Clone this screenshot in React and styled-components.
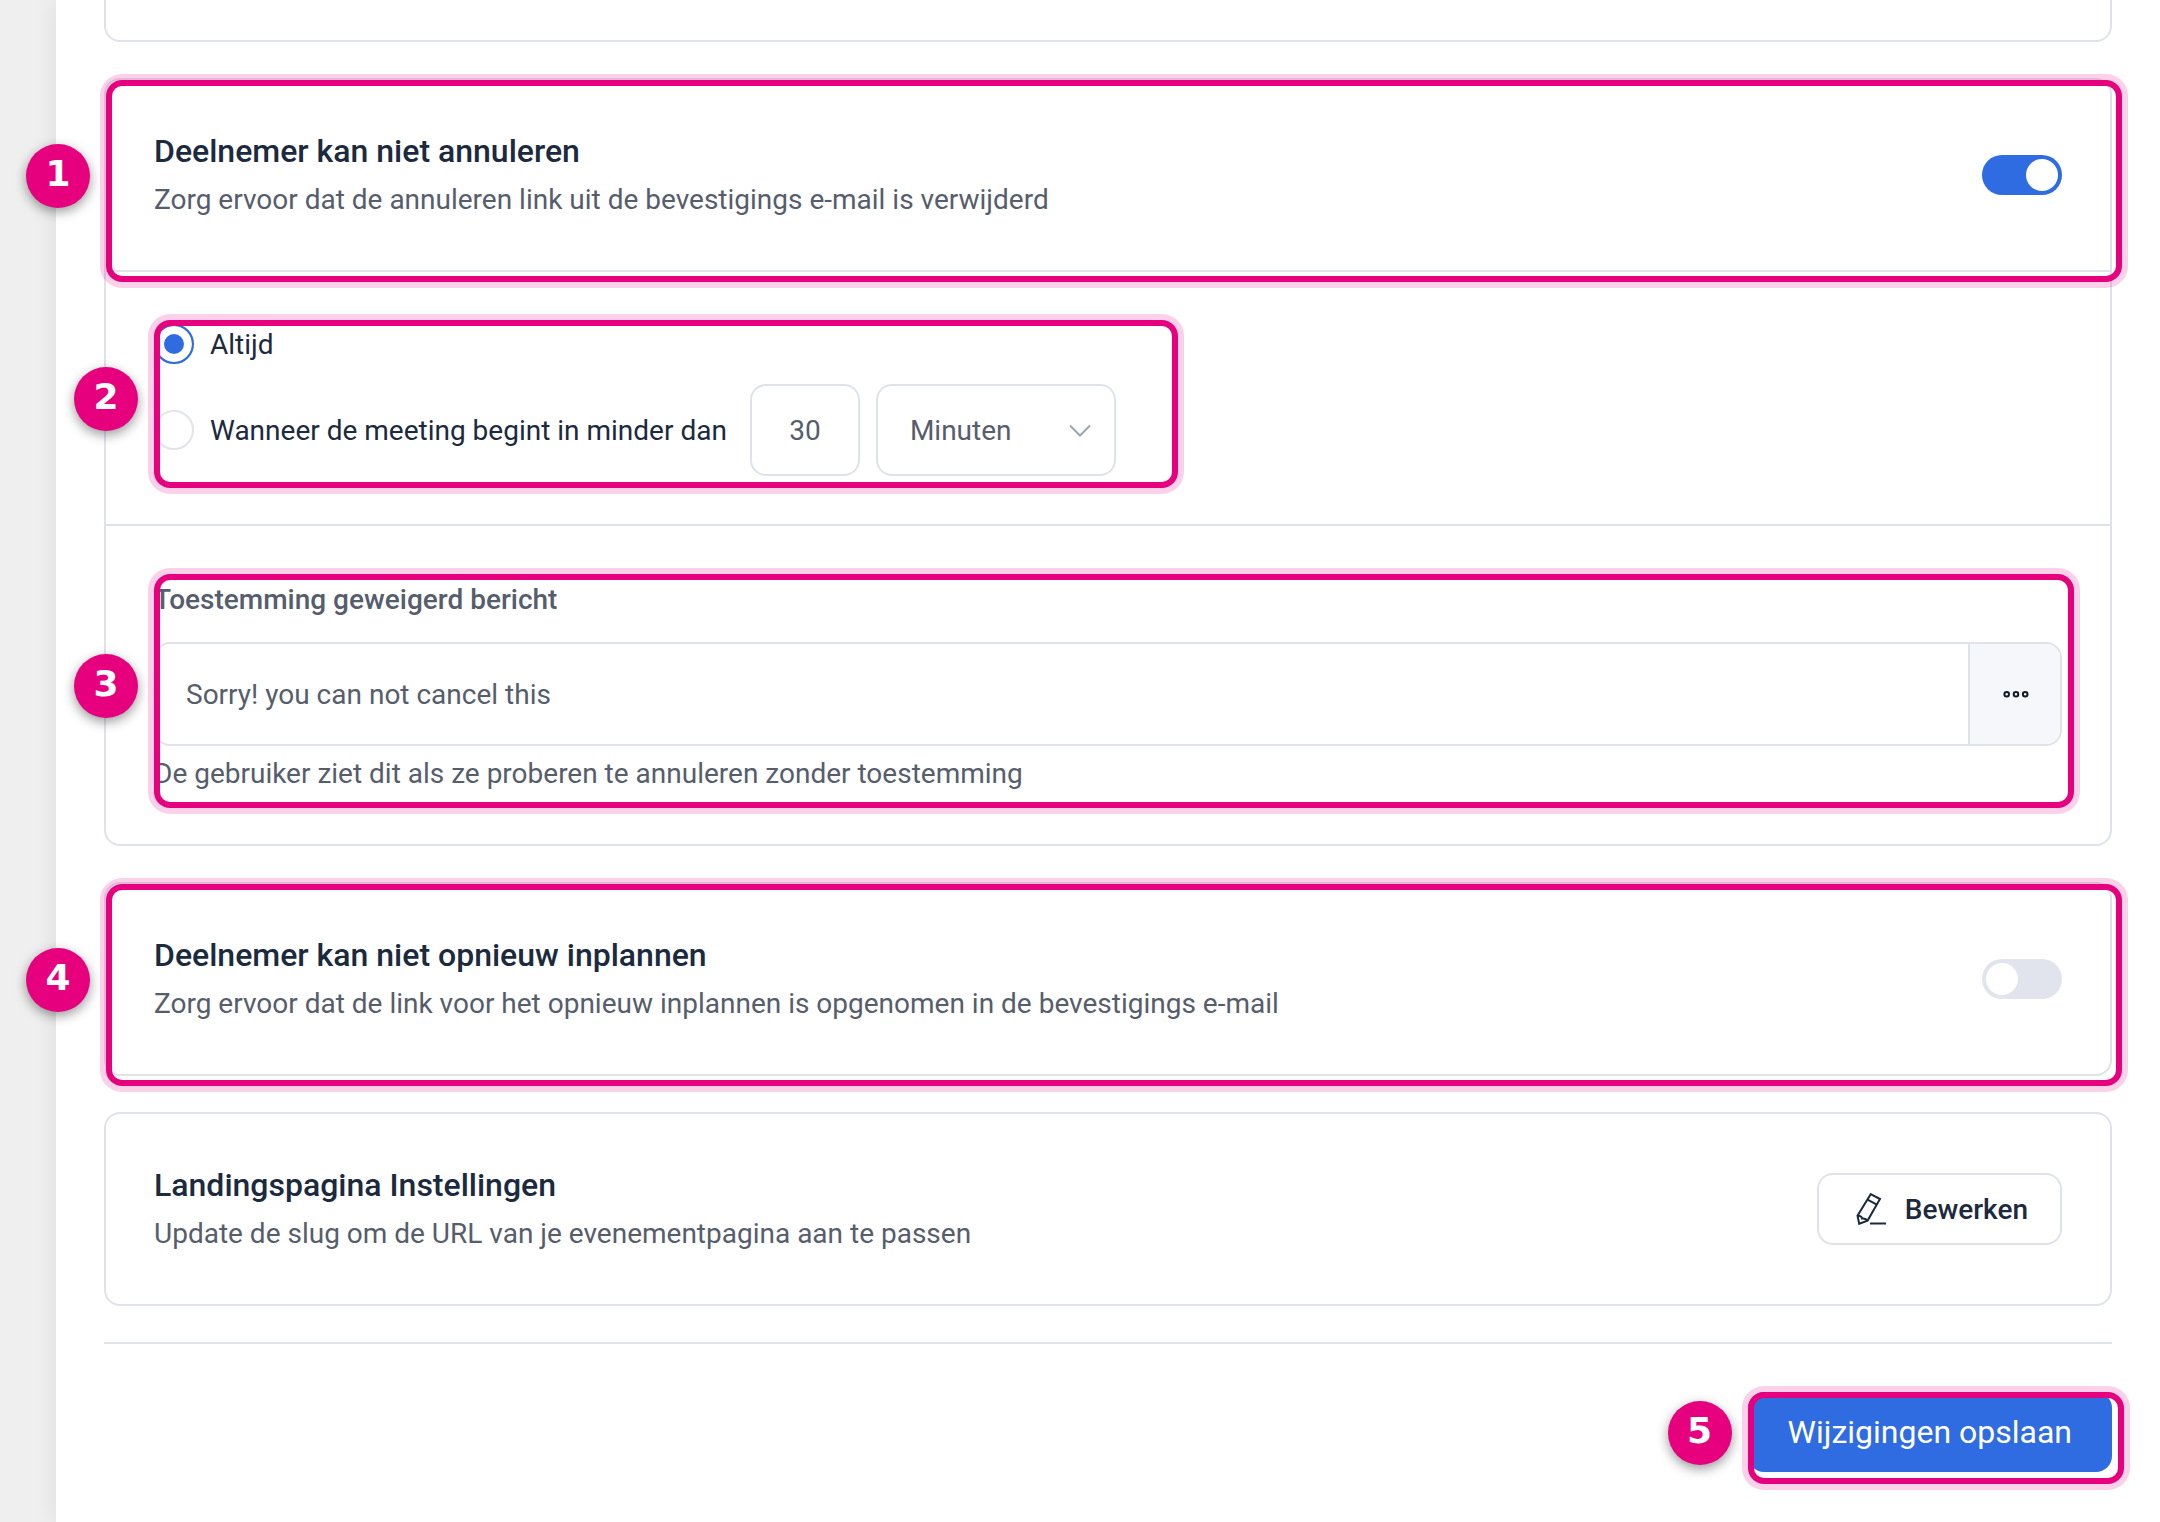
import React, { useState } from "react";
import styled, { createGlobalStyle, css } from "styled-components";

const theme = {
  blue: "#2f6be1",
  pink: "#e6007e",
  glow: "rgba(230, 0, 126, 0.18)",
  dark: "#1b2a3e",
  gray: "#565d6d",
  border: "#dfe3e9",
  off: "#e1e4ec",
};

const App = () => {
  const [noCancel, setNoCancel] = useState(true);
  const [noReschedule, setNoReschedule] = useState(false);
  const [when, setWhen] = useState("always");
  const [amount, setAmount] = useState("30");
  const [unit, setUnit] = useState("minutes");
  const [message, setMessage] = useState("Sorry! you can not cancel this");

  return (
    <Page>
      <GlobalStyle />
      <Panel>
        <CardEnd />

        <Card>
          <CardHeader>
            <label htmlFor="noCancel">
              <Title>Deelnemer kan niet annuleren</Title>
              <Text>
                Zorg ervoor dat de annuleren link uit de bevestigings e-mail is
                verwijderd
              </Text>
            </label>
            <Toggle
              id="noCancel"
              type="checkbox"
              checked={noCancel}
              onChange={() => setNoCancel(!noCancel)}
            />
            <Marker n="1" />
          </CardHeader>
          <Section>
            <Options>
              <Option>
                <Radio
                  id="always"
                  type="radio"
                  name="when"
                  checked={when === "always"}
                  onChange={() => setWhen("always")}
                />
                <label htmlFor="always">Altijd</label>
              </Option>
              <Option>
                <Radio
                  id="within"
                  type="radio"
                  name="when"
                  checked={when === "within"}
                  onChange={() => setWhen("within")}
                />
                <label htmlFor="within">
                  Wanneer de meeting begint in minder dan
                </label>
                <Fields>
                  <NumberInput
                    aria-label="Aantal"
                    value={amount}
                    onChange={(e) => setAmount(e.target.value)}
                  />
                  <SelectBox>
                    <select
                      aria-label="Eenheid"
                      value={unit}
                      onChange={(e) => setUnit(e.target.value)}
                    >
                      <option value="minutes">Minuten</option>
                      <option value="hours">Uren</option>
                      <option value="days">Dagen</option>
                    </select>
                    <svg width="22" height="14" viewBox="0 0 22 14">
                      <path
                        d="M1 1.5L11 11.5L21 1.5"
                        fill="none"
                        stroke="#9aa5b1"
                        strokeWidth="2"
                      />
                    </svg>
                  </SelectBox>
                </Fields>
              </Option>
              <Marker n="2" />
            </Options>
          </Section>
          <Section>
            <Message>
              <label htmlFor="message">Toestemming geweigerd bericht</label>
              <InputGroup>
                <input
                  id="message"
                  value={message}
                  onChange={(e) => setMessage(e.target.value)}
                />
                <button aria-label="Meer">
                  <svg width="28" height="8" viewBox="0 0 28 8">
                    <g fill="none" stroke="#131a26" strokeWidth="2">
                      <circle cx="4.7" cy="4.3" r="2.3" />
                      <circle cx="14" cy="4.3" r="2.3" />
                      <circle cx="23.2" cy="4.3" r="2.3" />
                    </g>
                  </svg>
                </button>
              </InputGroup>
              <Help>
                De gebruiker ziet dit als ze proberen te annuleren zonder
                toestemming
              </Help>
              <Marker n="3" />
            </Message>
          </Section>
        </Card>

        <Card>
          <CardHeader>
            <label htmlFor="noReschedule">
              <Title>Deelnemer kan niet opnieuw inplannen</Title>
              <Text>
                Zorg ervoor dat de link voor het opnieuw inplannen is opgenomen
                in de bevestigings e-mail
              </Text>
            </label>
            <Toggle
              id="noReschedule"
              type="checkbox"
              checked={noReschedule}
              onChange={() => setNoReschedule(!noReschedule)}
            />
            <Marker n="4" />
          </CardHeader>
        </Card>

        <Card>
          <CardHeader>
            <div>
              <Title>Landingspagina Instellingen</Title>
              <Text>
                Update de slug om de URL van je evenementpagina aan te passen
              </Text>
            </div>
            <EditButton>
              <PencilIcon />
              Bewerken
            </EditButton>
          </CardHeader>
        </Card>

        <Footer>
          <SaveWrap>
            <SaveButton>Wijzigingen opslaan</SaveButton>
            <Marker n="5" />
          </SaveWrap>
        </Footer>
      </Panel>
    </Page>
  );
};

export default App;

// pink frame with its number, laid over the parent
const Marker = ({ n }) => (
  <>
    <Frame />
    <Badge>{n}</Badge>
  </>
);

const PencilIcon = () => (
  <svg width="32" height="32" viewBox="0 0 32 32">
    <g fill="none" stroke={theme.dark} strokeWidth="2">
      <path d="M15.7 1.2L25 6L12.6 27.6L4.2 30.8L2.5 22.8Z" />
      <path d="M12.5 6.6L21.8 11.6" />
      <path d="M2.5 22.8C5 22.6 6.6 23.4 7.2 25.6C9 25.3 10.8 26 12.6 27.6" />
      <path d="M15 30.5H31" />
    </g>
  </svg>
);

const GlobalStyle = createGlobalStyle`
  * {
    box-sizing: border-box;
  }
  body {
    margin: 0;
    background: #efefef;
    color: ${theme.dark};
    font-family: Roboto, sans-serif;
    font-size: 28px;
  }
  input, select, button {
    margin: 0;
    font: inherit;
    color: inherit;
  }
`;

const Page = styled.div`
  min-height: 100vh;
  padding-left: 56px;
  display: flex;
`;

const Panel = styled.main`
  flex: 1;
  padding: 0 48px 48px;
  background: #fff;
  box-shadow: 0 0 24px rgba(0, 0, 0, 0.08);
`;

const Card = styled.section`
  margin-bottom: 36px;
  border: 2px solid ${theme.border};
  border-radius: 16px;
`;

const CardEnd = styled(Card)`
  height: 42px;
  border-top: 0;
  border-top-left-radius: 0;
  border-top-right-radius: 0;
`;

const CardHeader = styled.div`
  position: relative;
  display: flex;
  align-items: center;
  justify-content: space-between;
  padding: 48px;
`;

const Title = styled.span`
  display: block;
  margin-bottom: 4px;
  font-size: 32px;
  font-weight: 500;
  line-height: 46px;
`;

const Text = styled.span`
  display: block;
  color: ${theme.gray};
  line-height: 44px;
`;

const Section = styled.div`
  padding: 48px;
  border-top: 2px solid ${theme.border};
`;

const Options = styled.div`
  position: relative;
  display: flex;
  flex-direction: column;
  gap: 16px;
  width: fit-content;
  padding-right: 50px;
`;

const Option = styled.div`
  display: flex;
  align-items: center;
  gap: 16px;
  min-height: 48px;
`;

const Radio = styled.input`
  appearance: none;
  width: 40px;
  height: 40px;
  border: 2px solid ${theme.off};
  border-radius: 50%;
  background: #fff;

  &:checked {
    border-color: ${theme.blue};
    background: ${theme.blue};
    box-shadow: inset 0 0 0 8px #fff;
  }
`;

const Fields = styled.div`
  display: flex;
  gap: 16px;
  padding-left: 7px;
  color: ${theme.gray};
`;

const box = css`
  border: 2px solid ${theme.border};
  border-radius: 16px;
  background: #fff;
`;

const NumberInput = styled.input`
  ${box}
  width: 110px;
  height: 92px;
  text-align: center;
`;

const SelectBox = styled.div`
  position: relative;
  width: 240px;

  select {
    ${box}
    appearance: none;
    width: 100%;
    height: 92px;
    padding: 0 32px;
  }

  svg {
    position: absolute;
    right: 25px;
    top: 40px;
    pointer-events: none;
  }
`;

const Message = styled.div`
  position: relative;
  color: ${theme.gray};

  label {
    display: block;
    margin-bottom: 16px;
    font-weight: 500;
    line-height: 52px;
  }
`;

const InputGroup = styled.div`
  ${box}
  display: flex;
  height: 104px;
  overflow: hidden;

  input {
    flex: 1;
    padding: 0 30px;
    border: 0;
    background: none;
  }

  button {
    display: flex;
    align-items: center;
    justify-content: center;
    width: 92px;
    padding: 0 0 0 2px;
    border: 0;
    border-left: 2px solid ${theme.border};
    background: #f5f7fb;
  }
`;

const Help = styled.p`
  margin: 6px 0 0;
  line-height: 44px;
`;

const Toggle = styled.input`
  appearance: none;
  width: 80px;
  height: 40px;
  padding: 4px;
  border-radius: 20px;
  background: ${theme.off};
  cursor: pointer;

  &::before {
    content: "";
    display: block;
    width: 32px;
    height: 32px;
    border-radius: 50%;
    background: #fff;
  }

  &:checked {
    background: ${theme.blue};
  }

  &:checked::before {
    margin-left: auto;
  }
`;

const EditButton = styled.button`
  ${box}
  display: flex;
  align-items: center;
  gap: 18px;
  height: 72px;
  padding: 0 32px 0 36px;
  font-weight: 500;
`;

const Footer = styled.footer`
  display: flex;
  justify-content: flex-end;
  padding-top: 48px;
  border-top: 2px solid ${theme.border};
`;

const SaveWrap = styled.div`
  position: relative;
`;

const SaveButton = styled.button`
  height: 80px;
  padding: 0 40px;
  border: 0;
  border-radius: 16px;
  background: ${theme.blue};
  color: #fff;
  font-size: 32px;
`;

const Frame = styled.div`
  position: absolute;
  top: 0;
  left: 0;
  right: -12px;
  bottom: -12px;
  border: 6px solid ${theme.pink};
  border-radius: 16px;
  box-shadow: 0 0 0 6px ${theme.glow};
  pointer-events: none;
`;

const Badge = styled.div`
  position: absolute;
  top: calc(50% - 31px);
  left: -80px;
  width: 64px;
  height: 64px;
  border-radius: 50%;
  background: ${theme.pink};
  box-shadow: 0 4px 12px rgba(0, 0, 0, 0.4);
  color: #fff;
  font: bold 36px/60px "DejaVu Sans", sans-serif;
  text-align: center;
`;
